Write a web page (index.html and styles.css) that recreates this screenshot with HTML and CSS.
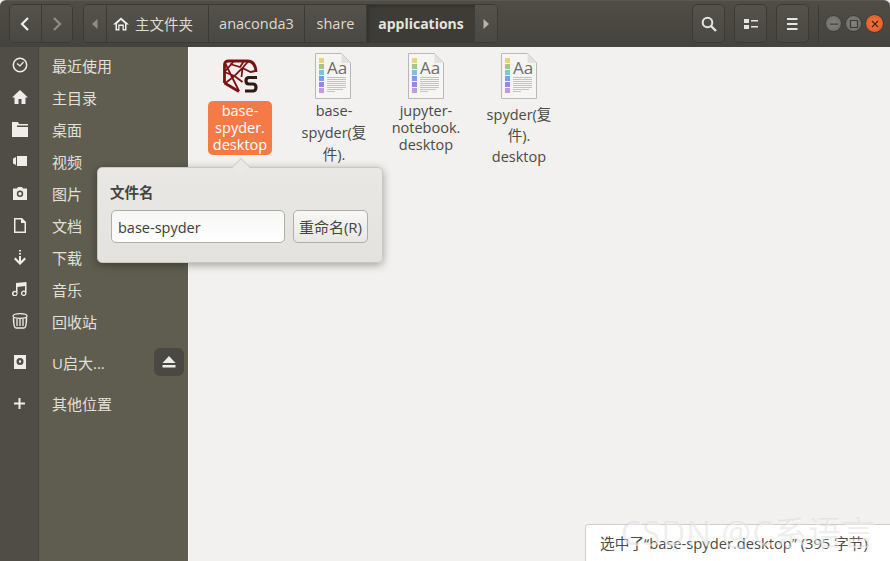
FILE: index.html
```html
<!DOCTYPE html>
<html lang="zh-CN">
<head>
    <meta charset="UTF-8">
    <title>applications</title>
    <link rel="stylesheet" href="styles.css">
</head>
<body>
    <div class="window">

        <!-- Header bar -->
        <header class="headerbar">
            <div class="btn-group nav-group">
                <button class="hb-btn nav-btn"><svg width="12" height="16" viewBox="0 0 12 16"><path d="M9 2 3 8l6 6" fill="none" stroke="#f0efec" stroke-width="2.2"/></svg></button>
                <button class="hb-btn nav-btn"><svg width="12" height="16" viewBox="0 0 12 16"><path d="m3 2 6 6-6 6" fill="none" stroke="#8f8d85" stroke-width="2.2"/></svg></button>
            </div>
            <div class="btn-group path-group">
                <button class="hb-btn arrow-btn"><svg width="6" height="10" viewBox="0 0 6 10"><path d="M5.5 0v10L0 5z" fill="#8f8d85"/></svg></button>
                <button class="hb-btn crumb home-crumb">
                    <svg width="16" height="14" viewBox="0 0 16 14"><path fill-rule="evenodd" d="M8 .5 0 7.500h2.500V13.500h4V9h3v4.500h4V7.500H16zM8 3l4 3.800v5.200h-1.200V7.500H5.200V12H4V6.800z" fill="#f0efec"/></svg>
                    主文件夹
                </button>
                <button class="hb-btn crumb">anaconda3</button>
                <button class="hb-btn crumb">share</button>
                <button class="hb-btn crumb crumb-active">applications</button>
                <button class="hb-btn arrow-btn"><svg width="6" height="10" viewBox="0 0 6 10"><path d="M.5 0v10L6 5z" fill="#b5b3ab"/></svg></button>
            </div>
            <div class="header-right">
                <button class="hb-btn tool-btn"><svg width="16" height="16" viewBox="0 0 16 16"><circle cx="6.500" cy="6.500" r="4.800" fill="none" stroke="#e6e5e1" stroke-width="2"/><path d="m10 10 5 5" stroke="#e6e5e1" stroke-width="2.400"/></svg></button>
                <button class="hb-btn tool-btn"><svg width="14" height="12" viewBox="0 0 14 12"><path d="M0 1h5v4H0zM0 7h5v4H0zM7 2h7v1.500H7zM7 8h7v1.500H7z" fill="#e6e5e1"/></svg></button>
                <button class="hb-btn tool-btn"><svg width="12" height="12" viewBox="0 0 12 12"><path d="M0 0h10.500v2H0zM0 5h10.500v2H0zM0 10h10.500v2H0z" fill="#e6e5e1"/></svg></button>
                <span class="header-sep"></span>
                <div class="win-controls">
                    <span class="win-btn"><svg width="10" height="10" viewBox="0 0 10 10"><path d="M1 4.500h8v1.200H1z" fill="#3c3b37"/></svg></span>
                    <span class="win-btn"><svg width="10" height="10" viewBox="0 0 10 10"><path d="M1.500 1.500h7v7h-7z" fill="none" stroke="#3c3b37" stroke-width="1.200"/></svg></span>
                    <span class="win-btn win-close"><svg width="10" height="10" viewBox="0 0 10 10"><path d="m2 2 6 6M8 2 2 8" stroke="#4a2413" stroke-width="1.300"/></svg></span>
                </div>
            </div>
        </header>

        <div class="content">

            <!-- Places sidebar -->
            <nav class="sidebar">
                <div class="place"><span class="place-icon"><svg width="16" height="16" viewBox="0 0 16 16"><circle cx="8" cy="8" r="6.700" fill="none" stroke="#eeede9" stroke-width="1.500"/><path d="M5 6.500 8 9l3.500-4" fill="none" stroke="#eeede9" stroke-width="1.200"/></svg></span>最近使用</div>
                <div class="place"><span class="place-icon"><svg width="16" height="14" viewBox="0 0 16 14"><path d="M8 0 0 7.500h2.500V14h4V9h3v5h4V7.500H16z" fill="#eeede9"/></svg></span>主目录</div>
                <div class="place"><span class="place-icon"><svg width="16" height="15" viewBox="0 0 16 15"><path d="M0 0h6l1 2h9v1.500H5V5h11v10H0z" fill="#eeede9"/></svg></span>桌面</div>
                <div class="place"><span class="place-icon"><svg width="14" height="10" viewBox="0 0 14 10"><path d="M4 0h10v10H4zM0 2.500 3 1v8L0 7.500z" fill="#eeede9"/></svg></span>视频</div>
                <div class="place"><span class="place-icon"><svg width="14" height="13" viewBox="0 0 14 13"><path fill-rule="evenodd" d="M4 1.500 5 0h4l1 1.500h4V13H0V1.500zM7 3.500a3.200 3.200 0 1 0 0 6.400 3.200 3.200 0 0 0 0-6.400zM7 5a1.700 1.700 0 1 1 0 3.400A1.700 1.700 0 0 1 7 5z" fill="#eeede9"/></svg></span>图片</div>
                <div class="place"><span class="place-icon"><svg width="12" height="15" viewBox="0 0 12 15"><path fill-rule="evenodd" d="M0 0h8l4 4v11H0zM1.500 1.500v12h9V5H7V1.500z" fill="#eeede9"/></svg></span>文档</div>
                <div class="place"><span class="place-icon"><svg width="14" height="15" viewBox="0 0 14 15"><path d="M6 0h2v1.500H6zM6 3h2v1.500H6zM6 6h2v5l3.500-3.500L13 9l-6 6-6-6 1.500-1.500L6 11z" fill="#eeede9"/></svg></span>下载</div>
                <div class="place"><span class="place-icon"><svg width="15" height="14" viewBox="0 0 15 14"><path fill-rule="evenodd" d="M4 1 14.500 0v11.200a2.800 2.800 0 1 1-1.500-2.400V4L5.500 5v6.500A2.800 2.800 0 1 1 4 9.100zM3 10a1.500 1.500 0 1 0 0 3 1.500 1.500 0 0 0 0-3zM11.700 9.700a1.500 1.500 0 1 0 0 3 1.500 1.500 0 0 0 0-3z" fill="#eeede9"/></svg></span>音乐</div>
                <div class="place"><span class="place-icon"><svg width="16" height="16" viewBox="0 0 16 16"><ellipse cx="8" cy="3" rx="7" ry="2.300" fill="none" stroke="#eeede9" stroke-width="1.300"/><path d="M1.500 4.500c0 6 .5 10.500 2.500 10.500h8c2 0 2.500-4.500 2.500-10.500" fill="none" stroke="#eeede9" stroke-width="1.500"/><path d="M5 6v7M8 6v7M11 6v7" stroke="#eeede9" stroke-width="1.300"/></svg></span>回收站</div>
                <div class="place place-drive">
                    <span class="place-icon"><svg width="12" height="14" viewBox="0 0 12 14"><path fill-rule="evenodd" d="M0 0h12v14H0zM6 3a3.500 3.500 0 1 0 0 7 3.500 3.500 0 0 0 0-7zM6 5.300a1.200 1.200 0 1 1 0 2.400 1.200 1.200 0 0 1 0-2.400z" fill="#eeede9"/></svg></span>
                    <span class="place-name">U启大...</span>
                    <button class="eject-btn"><svg width="14" height="12" viewBox="0 0 14 12"><path d="M7 0l6.500 7H.5zM.5 9h13v2.500H.5z" fill="#eeede9"/></svg></button>
                </div>
                <div class="place place-other"><span class="place-icon"><svg width="11" height="11" viewBox="0 0 11 11"><path d="M4.500 0h2v4.500H11v2H6.500V11h-2V6.500H0v-2h4.500z" fill="#eeede9"/></svg></span>其他位置</div>
            </nav>

            <!-- File icons -->
            <main class="files">
                <div class="file">
                    <svg class="spyder-icon" width="36" height="34" viewBox="0 0 36 34">
                        <path d="M2.500 24V6Q2.500 2 6.500 2H25Q33.500 2 34 13M2.500 24 17 32.500" fill="none" stroke="#7a1214" stroke-width="2.800" stroke-linejoin="round"/>
                        <path d="M2.500 13 12 2M2.500 3 17 32M2.500 13l10 4 8-8 6-7M20.500 9l8 4 5-1M12.500 17l-9 7M12.500 17l8 6M20.500 9l-1 9M8 5l10 3 4-6" fill="none" stroke="#7a1214" stroke-width="1.800"/>
                        <path d="M35 18.500H27c-4 0-4 6.500 0 6.500h4c4 0 4 7 0 7h-8" fill="none" stroke="#2f1a16" stroke-width="3.200"/>
                    </svg>
                    <span class="file-name file-selected">base-<br>spyder.<br>desktop</span>
                </div>
                <div class="file">
                    <svg class="doc-icon" width="36" height="46" viewBox="0 0 36 46"><use href="#doc"/></svg>
                    <span class="file-name file-name-mixed">base-<br>spyder(复<br>件).</span>
                </div>
                <div class="file">
                    <svg class="doc-icon" width="36" height="46" viewBox="0 0 36 46"><use href="#doc"/></svg>
                    <span class="file-name">jupyter-<br>notebook.<br>desktop</span>
                </div>
                <div class="file">
                    <svg class="doc-icon" width="36" height="46" viewBox="0 0 36 46"><use href="#doc"/></svg>
                    <span class="file-name file-name-tall">spyder(复<br>件).<br>desktop</span>
                </div>
            </main>
        </div>

        <!-- Rename popover -->
        <div class="popover">
            <span class="popover-arrow"></span>
            <div class="popover-title">文件名</div>
            <div class="popover-row">
                <input class="name-input" type="text" value="base-spyder">
                <button class="rename-btn">重命名(R)</button>
            </div>
        </div>

        <div class="status">选中了“base-spyder.desktop” (395 字节)</div>
        <div class="watermark">CSDN @C系语言</div>
    </div>

    <!-- Text document icon, used three times -->
    <svg class="defs" width="0" height="0">
        <defs>
            <g id="doc">
                <path d="M.5.5h26l9 9.500v35.500H.5z" fill="#f6f5f3" stroke="#b9b8b4"/>
                <path d="M26.500.5V10h9z" fill="#e2e1de"/>
                <rect x="4" y="5" width="5" height="5" fill="#e8d47e"/>
                <rect x="4" y="11" width="5" height="5" fill="#a9c48b"/>
                <rect x="4" y="17" width="5" height="5" fill="#79c6d8"/>
                <rect x="4" y="23" width="5" height="5" fill="#7e9de6"/>
                <rect x="4" y="29" width="5" height="5" fill="#9a86e4"/>
                <rect x="4" y="35" width="5" height="5" fill="#c49ade"/>
                <text x="12" y="21" class="doc-letters">Aa</text>
                <path d="M12 24.500h19M12 26.500h19M12 28.500h19M12 30.500h19M12 32.500h19M12 34.500h19M12 36.500h16M12 38.500h8" stroke="#c4c3c0"/>
            </g>
        </defs>
    </svg>
</body>
</html>
```

FILE: styles.css
```css
* {
    box-sizing: border-box;
}
html, body {
    margin: 0;
    padding: 0;
    height: 100%;
    overflow: hidden;
}
body {
    font-family: "Open Sans", "Noto Sans CJK SC", sans-serif;
    font-size: 14px;
    background-color: #f2f1f0;
}
button {
    font-family: inherit;
    font-size: inherit;
    padding: 0;
}
.window {
    position: relative;
    width: 890px;
    height: 561px;
    display: flex;
    flex-direction: column;
}
.defs {
    position: absolute;
}
.doc-letters {
    font-family: "Open Sans", sans-serif;
    font-size: 17px;
    fill: #6d6d6b;
}

/* Header bar */
.headerbar {
    height: 47px;
    flex-shrink: 0;
    display: flex;
    align-items: center;
    padding: 0 0 1px 9px;
    background: linear-gradient(#4f4d46, #45433d);
    border-top: 1px solid #5a5850;
    border-radius: 6px 6px 0 0;
}
.btn-group {
    display: flex;
    height: 39px;
    border: 1px solid #3b3a34;
    border-radius: 5px;
    overflow: hidden;
}
.hb-btn {
    height: 100%;
    border: none;
    color: #dfdbd2;
    background: linear-gradient(#54524b, #4a4842);
    display: flex;
    align-items: center;
    justify-content: center;
}
.nav-group {
    width: 64px;
}
.nav-btn {
    flex: 1;
}
.nav-btn + .nav-btn {
    border-left: 1px solid #3b3a34;
}
.path-group {
    margin-left: 10px;
    width: 415px;
}
.arrow-btn {
    flex: 1;
}
.crumb {
    flex: none;
    border-left: 1px solid #3b3a34;
    font-size: 14.500px;
    white-space: nowrap;
}
.home-crumb {
    gap: 6px;
    width: 102px;
    padding-left: 6px;
    justify-content: flex-start;
}
.crumb:nth-child(3) {
    width: 96px;
}
.crumb:nth-child(4) {
    width: 62px;
}
.crumb-active {
    width: 109px;
    font-size: 14px;
    font-weight: 700;
    background: #3e3c37;
    color: #e6e3dc;
    box-shadow: inset 2px 2px 2px #34332e;
}
.header-right {
    margin-left: auto;
    display: flex;
    align-items: center;
    gap: 9px;
    padding-right: 6px;
}
.tool-btn {
    width: 33px;
    height: 39px;
    border: 1px solid #3b3a34;
    border-radius: 5px;
}
.header-sep {
    width: 1px;
    height: 38px;
    background: #3b3a34;
}
.win-controls {
    display: flex;
    align-items: center;
    gap: 3px;
    margin-left: -3px;
}
.win-btn {
    width: 17px;
    height: 17px;
    border-radius: 50%;
    background: radial-gradient(#85837c, #6c6a64);
    border: 1px solid #3e3d38;
    display: flex;
    align-items: center;
    justify-content: center;
}
.win-close {
    width: 19px;
    height: 19px;
    background: radial-gradient(#f47a42, #e0531f);
}

/* Sidebar */
.content {
    flex: 1;
    display: flex;
    min-height: 0;
}
.sidebar {
    width: 189px;
    flex-shrink: 0;
    padding-top: 2px;
    color: #e2e0d9;
    font-size: 15px;
    background: linear-gradient(90deg, #4f4d45 0, #4f4d45 38px, #46443d 38px, #46443d 39px, #5f5c50 39px);
    border-right: 1px solid #f8f7f6;
}
.place {
    height: 32px;
    display: flex;
    align-items: center;
}
.place-icon {
    width: 39px;
    margin-right: 13px;
    display: flex;
    justify-content: center;
}
.place-drive {
    height: 34px;
    margin-top: 8px;
}
.place-name {
    flex: 1;
}
.place-other {
    margin-top: 8px;
}
.eject-btn {
    width: 30px;
    height: 28px;
    margin-right: 4px;
    border: none;
    border-radius: 6px;
    background: #4a4842;
    display: flex;
    align-items: center;
    justify-content: center;
}

/* File grid */
.files {
    flex: 1;
    display: flex;
    align-items: flex-start;
    gap: 9px;
    padding: 6px 0 0 9px;
    background-color: #f2f1f0;
}
.file {
    width: 84px;
    display: flex;
    flex-direction: column;
    align-items: center;
    color: #4b4a45;
    font-size: 14.500px;
    line-height: 17px;
    text-align: center;
}
.spyder-icon {
    margin: 6px 0 8px;
}
.doc-icon {
    margin-bottom: 2px;
}
.file-name {
    display: block;
    padding: 1px 2px 1px;
}
.file-selected {
    width: 64px;
    height: 54px;
    padding: 1px 0;
    color: #fff;
    background-color: #f47b47;
    border-radius: 5px;
}
.file-name-mixed {
    line-height: 22px;
    margin: -2px 0 0 2px;
}
.file-name-tall {
    line-height: 21px;
    margin-top: 2px;
}

/* Rename popover */
.popover {
    position: absolute;
    left: 97px;
    top: 167px;
    width: 286px;
    height: 96px;
    padding: 15px 14px 0 12px;
    background: linear-gradient(#e9e8e5, #e3e2df);
    border: 1px solid #c9c8c3;
    border-radius: 5px;
    box-shadow: 0 2px 8px rgba(0, 0, 0, 0.35);
}
.popover-arrow {
    position: absolute;
    left: 135px;
    top: -9px;
    width: 16px;
    height: 16px;
    background: #eae9e6;
    border-left: 1px solid #c9c8c3;
    border-top: 1px solid #c9c8c3;
    transform: rotate(45deg) scale(.8);
}
.popover-title {
    font-weight: 700;
    font-size: 14.500px;
    line-height: 19px;
    color: #45443f;
}
.popover-row {
    display: flex;
    gap: 8px;
    margin-top: 8px;
    margin-left: 1px;
}
.name-input {
    width: 174px;
    height: 33px;
    padding: 2px 6px 0;
    font-family: inherit;
    font-size: 14.500px;
    color: #3d3c38;
    background: linear-gradient(#f6f6f5, #fff);
    border: 1px solid #aeada8;
    border-radius: 5px;
    outline: none;
}
.rename-btn {
    width: 76px;
    height: 33px;
    font-size: 15px;
    color: #45443f;
    background: linear-gradient(#f8f8f7, #e8e7e4);
    border: 1px solid #aeada8;
    border-radius: 5px;
    white-space: nowrap;
}

/* Status bubble */
.status {
    position: absolute;
    right: 0;
    bottom: 0;
    width: 305px;
    height: 37px;
    padding: 9px 0 0 14px;
    font-size: 14.700px;
    line-height: 19px;
    color: #4b4a45;
    background-color: #fff;
    border: 1px solid #cfcecb;
    border-width: 1px 0 0 1px;
    border-radius: 4px 0 0 0;
    white-space: nowrap;
}
.watermark {
    position: absolute;
    right: 14px;
    bottom: 9px;
    font-size: 33px;
    letter-spacing: 1px;
    line-height: 38px;
    color: rgba(190, 190, 190, 0.25);
    text-shadow: 1px 1px rgba(255, 255, 255, 0.5);
    white-space: nowrap;
}
```
